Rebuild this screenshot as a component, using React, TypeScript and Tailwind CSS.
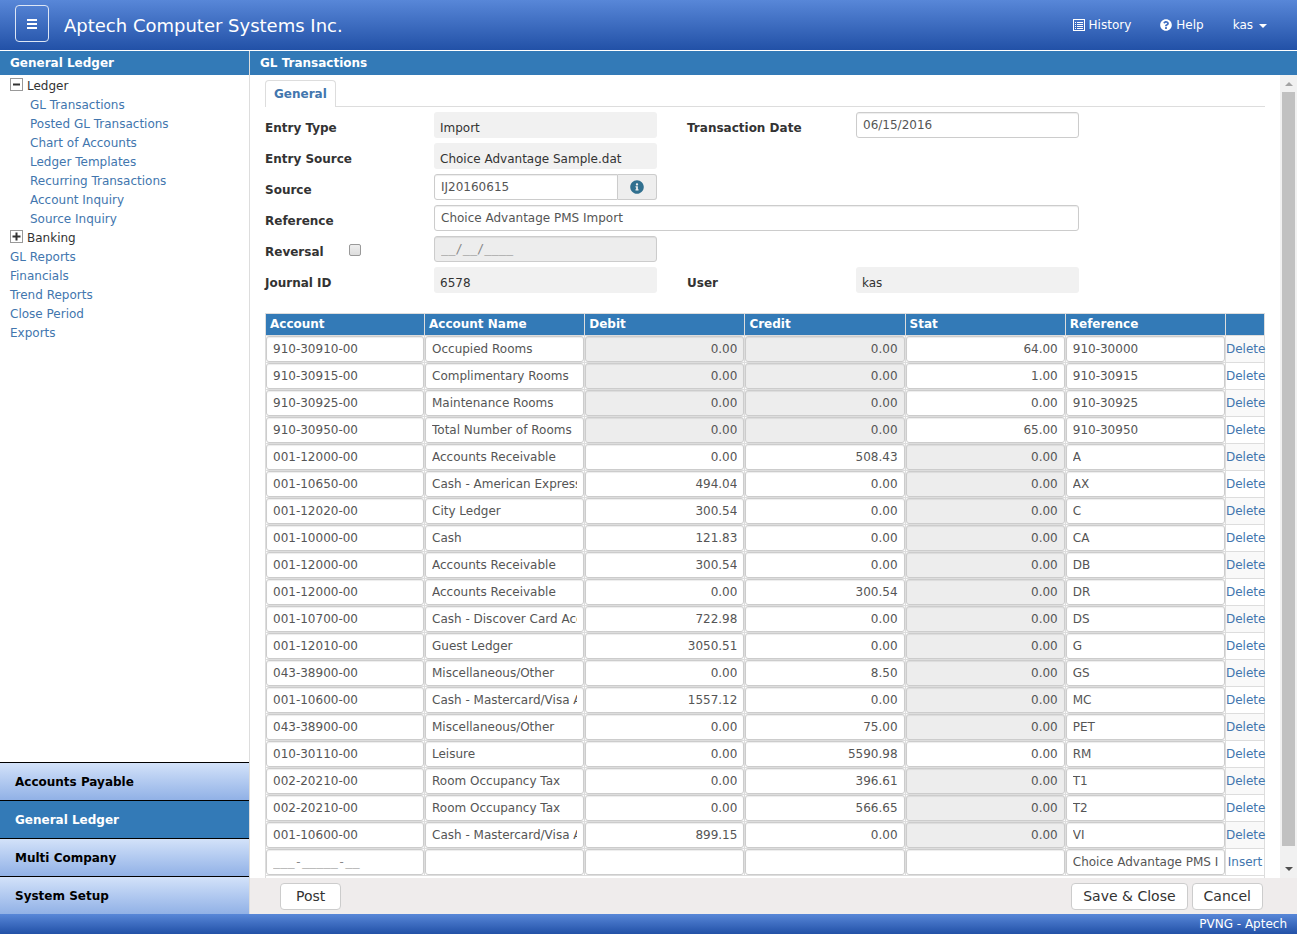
import { useState } from "react";
import { FaInfoCircle, FaQuestionCircle } from "react-icons/fa";

type Line = {
  account: string;
  name: string;
  debit: string;
  credit: string;
  stat: string;
  reference: string;
  statOnly?: boolean;
  statOpen?: boolean;
};

const lines: Line[] = [
  { account: "910-30910-00", name: "Occupied Rooms", debit: "0.00", credit: "0.00", stat: "64.00", reference: "910-30000", statOnly: true },
  { account: "910-30915-00", name: "Complimentary Rooms", debit: "0.00", credit: "0.00", stat: "1.00", reference: "910-30915", statOnly: true },
  { account: "910-30925-00", name: "Maintenance Rooms", debit: "0.00", credit: "0.00", stat: "0.00", reference: "910-30925", statOnly: true },
  { account: "910-30950-00", name: "Total Number of Rooms", debit: "0.00", credit: "0.00", stat: "65.00", reference: "910-30950", statOnly: true },
  { account: "001-12000-00", name: "Accounts Receivable", debit: "0.00", credit: "508.43", stat: "0.00", reference: "A" },
  { account: "001-10650-00", name: "Cash - American Express", debit: "494.04", credit: "0.00", stat: "0.00", reference: "AX" },
  { account: "001-12020-00", name: "City Ledger", debit: "300.54", credit: "0.00", stat: "0.00", reference: "C" },
  { account: "001-10000-00", name: "Cash", debit: "121.83", credit: "0.00", stat: "0.00", reference: "CA" },
  { account: "001-12000-00", name: "Accounts Receivable", debit: "300.54", credit: "0.00", stat: "0.00", reference: "DB" },
  { account: "001-12000-00", name: "Accounts Receivable", debit: "0.00", credit: "300.54", stat: "0.00", reference: "DR" },
  { account: "001-10700-00", name: "Cash - Discover Card Acc", debit: "722.98", credit: "0.00", stat: "0.00", reference: "DS" },
  { account: "001-12010-00", name: "Guest Ledger", debit: "3050.51", credit: "0.00", stat: "0.00", reference: "G" },
  { account: "043-38900-00", name: "Miscellaneous/Other", debit: "0.00", credit: "8.50", stat: "0.00", reference: "GS" },
  { account: "001-10600-00", name: "Cash - Mastercard/Visa A", debit: "1557.12", credit: "0.00", stat: "0.00", reference: "MC" },
  { account: "043-38900-00", name: "Miscellaneous/Other", debit: "0.00", credit: "75.00", stat: "0.00", reference: "PET" },
  { account: "010-30110-00", name: "Leisure", debit: "0.00", credit: "5590.98", stat: "0.00", reference: "RM", statOpen: true },
  { account: "002-20210-00", name: "Room Occupancy Tax", debit: "0.00", credit: "396.61", stat: "0.00", reference: "T1" },
  { account: "002-20210-00", name: "Room Occupancy Tax", debit: "0.00", credit: "566.65", stat: "0.00", reference: "T2" },
  { account: "001-10600-00", name: "Cash - Mastercard/Visa A", debit: "899.15", credit: "0.00", stat: "0.00", reference: "VI" },
];

const ledgerLinks = [
  "GL Transactions",
  "Posted GL Transactions",
  "Chart of Accounts",
  "Ledger Templates",
  "Recurring Transactions",
  "Account Inquiry",
  "Source Inquiry",
];

const topLinks = ["GL Reports", "Financials", "Trend Reports", "Close Period", "Exports"];

const modules = ["Accounts Payable", "General Ledger", "Multi Company", "System Setup"];

const columns = ["Account", "Account Name", "Debit", "Credit", "Stat", "Reference"];

const inputClass =
  "block h-[26px] w-full min-w-0 rounded-[3px] border border-[#ccc] bg-white px-[6px] text-[#555] shadow-[inset_0_1px_1px_rgba(0,0,0,0.075)] placeholder:font-['DejaVu_Sans_Mono',monospace] placeholder:text-[#888] disabled:bg-[#ededed]";

const labelClass = "h-[26px] pt-1 font-bold leading-6";

const linkClass = "text-[#4276ae]";

function ListIcon() {
  return (
    <svg width="12" height="12" viewBox="0 0 12 12" fill="none" stroke="currentColor" aria-hidden="true">
      <rect x="0.5" y="0.5" width="11" height="11" />
      <path d="M2 3.5h1M4 3.5h6M2 5.5h1M4 5.5h6M2 7.5h1M4 7.5h6M2 9.5h1M4 9.5h6" />
    </svg>
  );
}

function TreeToggle({ label, open, onToggle }: { label: string; open: boolean; onToggle: () => void }) {
  return (
    <button type="button" onClick={onToggle} aria-expanded={open} className="flex h-[19px] items-start gap-1">
      <svg width="13" height="13" viewBox="0 0 13 13" fill="none" className="mt-px" aria-hidden="true">
        <rect x="0.5" y="0.5" width="12" height="12" stroke="#999" />
        <path d={open ? "M3 6.5h7" : "M2.5 6.5h8M6.5 2.5v8"} stroke="#333" strokeWidth="2" />
      </svg>
      {label}
    </button>
  );
}

function Field({ id, label, value }: { id: string; label: string; value: string }) {
  return (
    <>
      <label htmlFor={id} className={labelClass}>
        {label}
      </label>
      <output id={id} className="block h-[26px] rounded-[3px] bg-[#f1f1f1] px-[6px] pt-1 leading-6">
        {value}
      </output>
    </>
  );
}

function Cell({ label, value, disabled, right }: { label: string; value: string; disabled?: boolean; right?: boolean }) {
  return (
    <td className="border border-[#ddd] p-0">
      <input
        type="text"
        aria-label={label}
        defaultValue={value}
        disabled={disabled}
        className={`${inputClass} ${right ? "text-right" : ""}`}
      />
    </td>
  );
}

function Sidebar() {
  const [ledgerOpen, setLedgerOpen] = useState(true);
  const [bankingOpen, setBankingOpen] = useState(false);
  const [active, setActive] = useState("General Ledger");

  return (
    <aside className="flex w-[250px] shrink-0 flex-col border-r border-[#ddd]">
      <h2 className="h-6 bg-[#337ab7] px-[10px] font-bold leading-6 text-white">{active}</h2>
      <nav className="flex-1 px-[10px] pt-[2px] leading-[19px]">
        <TreeToggle label="Ledger" open={ledgerOpen} onToggle={() => setLedgerOpen((v) => !v)} />
        {ledgerOpen && (
          <ul className="pl-5">
            {ledgerLinks.map((l) => (
              <li key={l}>
                <a href="#" className={linkClass}>
                  {l}
                </a>
              </li>
            ))}
          </ul>
        )}
        <TreeToggle label="Banking" open={bankingOpen} onToggle={() => setBankingOpen((v) => !v)} />
        <ul>
          {topLinks.map((l) => (
            <li key={l}>
              <a href="#" className={linkClass}>
                {l}
              </a>
            </li>
          ))}
        </ul>
      </nav>
      {modules.map((m) => (
        <button
          key={m}
          type="button"
          onClick={() => setActive(m)}
          className={`h-[38px] shrink-0 border-t border-black px-[15px] text-left font-bold ${
            m === active ? "bg-[#337ab7] text-white" : "bg-linear-to-b from-[#d3e2f9] to-[#91b1e6] text-black"
          }`}
        >
          {m}
        </button>
      ))}
    </aside>
  );
}

function EntryForm() {
  return (
    <form className="mr-[186px] mt-[5px] grid grid-cols-[139px_1fr_139px_1fr] gap-x-[30px] gap-y-[5px]">
      <Field id="entry-type" label="Entry Type" value="Import" />
      <label htmlFor="trans-date" className={labelClass}>
        Transaction Date
      </label>
      <input id="trans-date" type="text" defaultValue="06/15/2016" className={inputClass} />

      <Field id="entry-source" label="Entry Source" value="Choice Advantage Sample.dat" />

      <label htmlFor="source" className={`${labelClass} col-start-1`}>
        Source
      </label>
      <div className="flex">
        <input id="source" type="text" defaultValue="IJ20160615" className={`${inputClass} flex-1 rounded-r-none`} />
        <button
          type="button"
          aria-label="Source details"
          className="flex w-[39px] items-center justify-center rounded-r-[3px] border border-l-0 border-[#ccc] bg-[#eee] text-[#31708f]"
        >
          <FaInfoCircle size={14} />
        </button>
      </div>

      <label htmlFor="reference" className={`${labelClass} col-start-1`}>
        Reference
      </label>
      <input id="reference" type="text" defaultValue="Choice Advantage PMS Import" className={`${inputClass} col-span-3`} />

      <div className="flex">
        <label htmlFor="reversal" className={`${labelClass} w-[84px]`}>
          Reversal
        </label>
        <input
          id="reversal"
          type="checkbox"
          className="mt-2 size-3 appearance-none rounded-[2px] border border-[#999] bg-linear-to-b from-[#eee] to-[#ddd] checked:from-[#337ab7] checked:to-[#337ab7]"
        />
      </div>
      <input type="text" aria-label="Reversal date" placeholder="__/__/____" disabled className={inputClass} />
      <span className="col-span-2" />

      <Field id="journal-id" label="Journal ID" value="6578" />
      <Field id="user" label="User" value="kas" />
    </form>
  );
}

function LinesTable() {
  return (
    <table className="mt-5 w-full table-fixed border-collapse">
      <colgroup>
        <col className="w-[159px]" />
        <col span={5} />
        <col className="w-[39px]" />
      </colgroup>
      <thead>
        <tr className="h-[22px] bg-[#337ab7] text-left text-white">
          {columns.map((c) => (
            <th key={c} className="border border-[#ddd] px-1 py-0 font-bold leading-[21px]">
              {c}
            </th>
          ))}
          <th className="border border-[#ddd] p-0" aria-label="Actions" />
        </tr>
      </thead>
      <tbody>
        {lines.map((l, i) => (
          <tr key={i} className="odd:bg-[#f9f9f9]">
            <Cell label="Account" value={l.account} />
            <Cell label="Account Name" value={l.name} />
            <Cell label="Debit" value={l.debit} disabled={l.statOnly} right />
            <Cell label="Credit" value={l.credit} disabled={l.statOnly} right />
            <Cell label="Stat" value={l.stat} disabled={!l.statOnly && !l.statOpen} right />
            <Cell label="Reference" value={l.reference} />
            <td className="border border-[#ddd] p-0 align-top leading-[26px]">
              <a href="#" className={linkClass}>
                Delete
              </a>
            </td>
          </tr>
        ))}
        <tr>
          <td className="border border-[#ddd] p-0">
            <input type="text" aria-label="Account" placeholder="___-_____-__" className={inputClass} />
          </td>
          <Cell label="Account Name" value="" />
          <Cell label="Debit" value="" right />
          <Cell label="Credit" value="" right />
          <Cell label="Stat" value="" right />
          <Cell label="Reference" value="Choice Advantage PMS Import" />
          <td className="border border-[#ddd] p-0 text-center align-top leading-[26px]">
            <a href="#" className={linkClass}>
              Insert
            </a>
          </td>
        </tr>
        <tr>
          <td colSpan={7} className="h-4 border border-[#ddd] p-0" />
        </tr>
      </tbody>
    </table>
  );
}

function ScrollBar() {
  return (
    <div className="flex w-[17px] shrink-0 flex-col bg-[#f1f1f1]" aria-hidden="true">
      <svg width="17" height="17" viewBox="0 0 17 17">
        <path d="M5 11l4-4 4 4z" fill="#a3a3a3" />
      </svg>
      <div className="flex-1 px-[2px]">
        <div className="h-[98%] bg-[#c1c1c1]" />
      </div>
      <svg width="17" height="17" viewBox="0 0 17 17">
        <path d="M5 6l4 4 4-4z" fill="#505050" />
      </svg>
    </div>
  );
}

const buttonClass = "h-[27px] rounded-[4px] border border-[#ccc] bg-white text-sm text-[#333]";

export default function App() {
  return (
    <div className="flex h-screen flex-col bg-white font-['DejaVu_Sans',Verdana,sans-serif] text-xs text-[#333]">
      <header className="flex h-[51px] shrink-0 items-start border-b border-white bg-linear-to-b from-[#5887d8] to-[#2251a7] pl-[15px] pr-[30px] text-white">
        <button
          type="button"
          aria-label="Menu"
          className="mt-[5px] flex h-[37px] w-[34px] items-center justify-center rounded-[4px] border border-[#dde6f5]"
        >
          <svg width="10" height="10" viewBox="0 0 10 10" stroke="currentColor" strokeWidth="2" aria-hidden="true">
            <path d="M0 1h10M0 5h10M0 9h10" />
          </svg>
        </button>
        <h1 className="ml-[15px] text-lg leading-[52px]">Aptech Computer Systems Inc.</h1>
        <nav className="ml-auto flex h-[50px] items-center gap-[29px]">
          <a href="#" className="flex items-center gap-1">
            <ListIcon />
            History
          </a>
          <a href="#" className="flex items-center gap-1">
            <FaQuestionCircle size={12} />
            Help
          </a>
          <button type="button" className="flex items-center gap-[6px]">
            kas
            <svg width="8" height="4" viewBox="0 0 8 4" fill="currentColor" className="mt-[2px]" aria-hidden="true">
              <path d="M0 0h8L4 4z" />
            </svg>
          </button>
        </nav>
      </header>

      <div className="flex min-h-0 flex-1">
        <Sidebar />
        <main className="flex min-w-0 flex-1 flex-col">
          <h2 className="h-6 shrink-0 bg-[#337ab7] px-[10px] font-bold leading-6 text-white">GL Transactions</h2>
          <div className="flex min-h-0 flex-1">
            <div className="min-w-0 flex-1 overflow-hidden px-[15px] pt-[5px]">
              <div role="tablist" className="flex border-b border-[#ddd]">
                <button
                  type="button"
                  role="tab"
                  aria-selected="true"
                  className="-mb-px h-[27px] rounded-t-[4px] border border-b-0 border-[#ddd] bg-white px-[8px] font-bold text-[#4276ae]"
                >
                  General
                </button>
              </div>
              <EntryForm />
              <LinesTable />
            </div>
            <ScrollBar />
          </div>
          <div className="flex h-9 shrink-0 items-center gap-1 bg-[#efecec] pl-[30px] pr-[34px]">
            <button type="button" className={`${buttonClass} mr-auto px-[15px]`}>
              Post
            </button>
            <button type="button" className={`${buttonClass} px-[11px]`}>
              Save &amp; Close
            </button>
            <button type="button" className={`${buttonClass} px-[11px]`}>
              Cancel
            </button>
          </div>
        </main>
      </div>

      <footer className="h-5 shrink-0 bg-linear-to-b from-[#5887d8] to-[#2251a7] px-[10px] text-right leading-5 text-white">
        PVNG - Aptech
      </footer>
    </div>
  );
}
